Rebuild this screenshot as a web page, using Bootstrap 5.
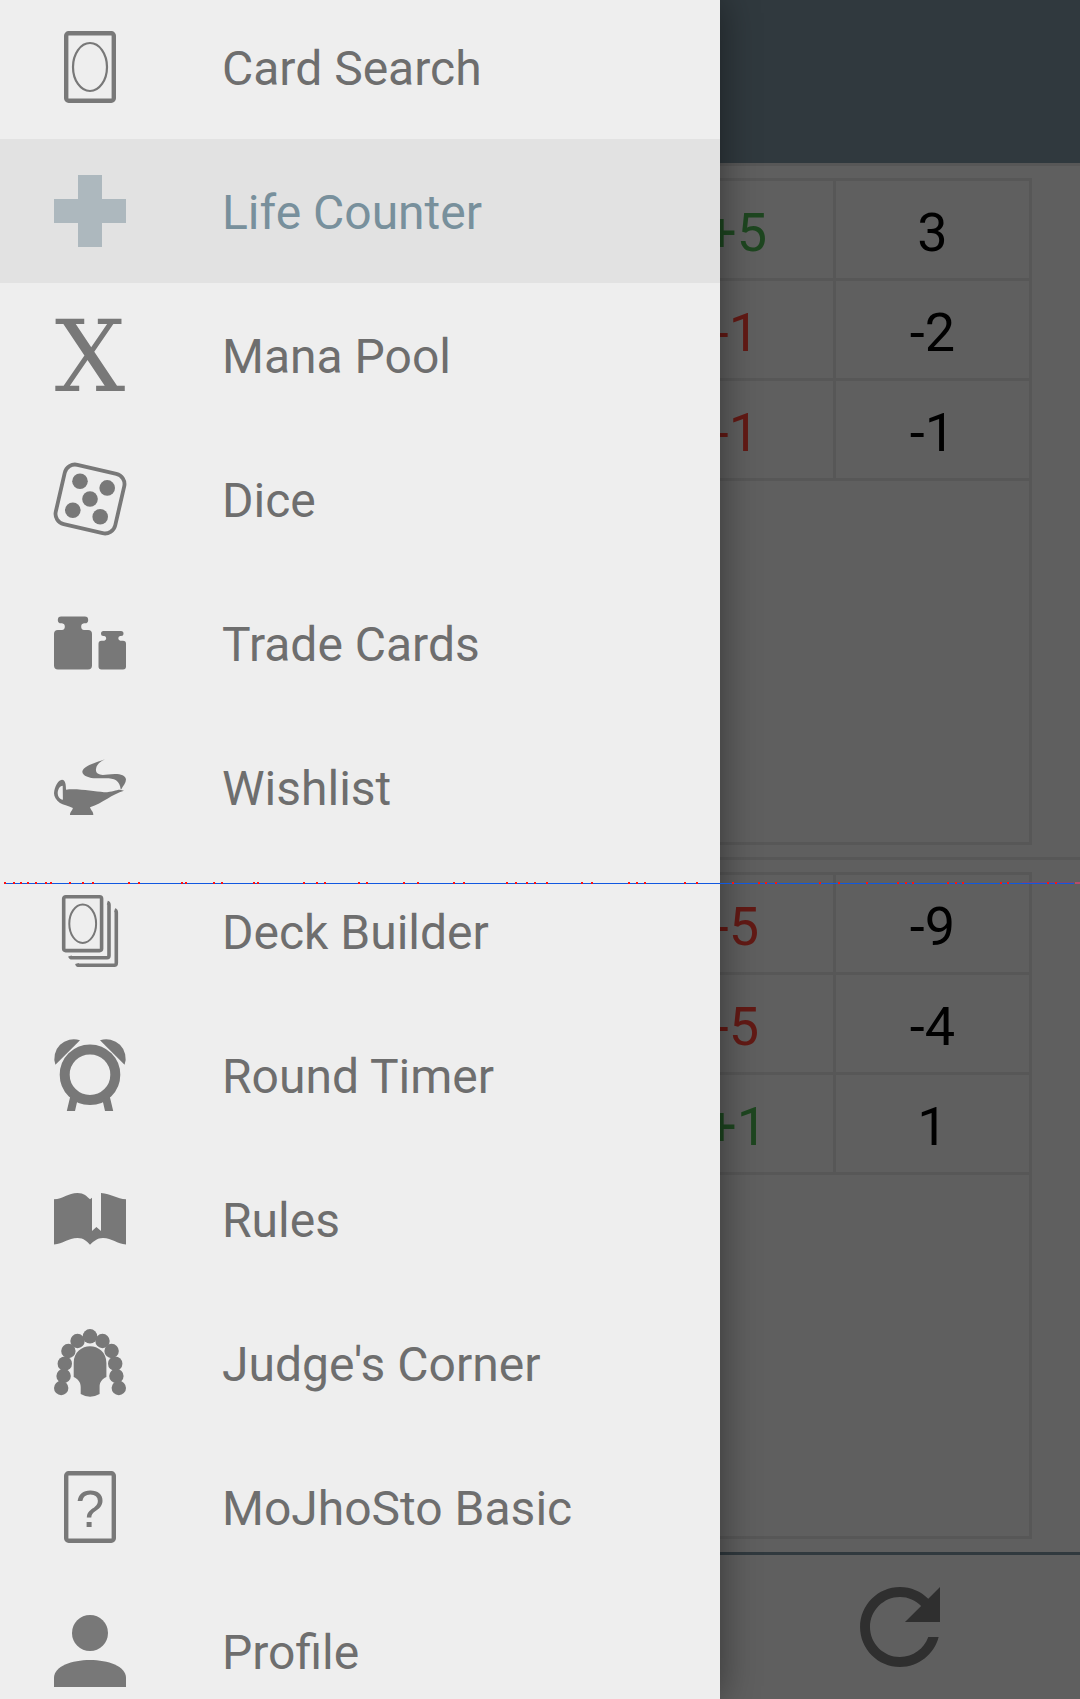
<!DOCTYPE html>
<html lang="en">
<head>
<meta charset="utf-8">
<meta name="viewport" content="width=device-width, initial-scale=1">
<title>Life Counter</title>
<link href="https://cdn.jsdelivr.net/npm/bootstrap@5.3.0/dist/css/bootstrap.min.css" rel="stylesheet">
<style>
body { font-family: Roboto, sans-serif; background: #eee; }
.app-bar { height: 163px; background: #78909c; }
.player { border-top: 3px solid #dadada; padding: 12px 48px 12px 0; }
.history { width: 395px; border: 3px solid #dadada; }
.history table { table-layout: fixed; border-collapse: separate; border-spacing: 0; font-size: 54px; line-height: 64px; }
.history td { height: 100px; padding: 6px 0 0; border-bottom: 3px solid #dadada; text-align: center; vertical-align: middle; color: #000; }
.history td:first-child { width: 193px; }
.history td + td { border-left: 3px solid #dadada; }
.history .gain { color: #4caf50; }
.history .loss { color: #f44336; }
.actions { height: 147px; margin-top: 1px; border-top: 3px solid #78909c; }
.actions svg { width: 80px; height: 80px; fill: #757575; }
.scrim { background: rgba(0, 0, 0, .6); }
.drawer { background: #eee; box-shadow: 0 0 36px rgba(0, 0, 0, .45); }
.drawer-list { margin-top: -5px; }
.drawer-item { height: 144px; padding: 0 54px; gap: 96px; font-size: 48px; line-height: 56px; color: #6e6e6e; }
.drawer-item span { padding-top: 4px; }
.drawer-item svg { width: 72px; height: 72px; flex: none; overflow: visible; fill: #787878; stroke: #787878; stroke-width: 0; }
.drawer-item .outline { fill: none; }
.drawer-item.selected { background: #e2e2e2; color: #78909c; }
.drawer-item.selected svg { fill: #adb8be; }
.trace { top: 882px; height: 3px; }
</style>
</head>
<body>
<div class="position-relative vh-100 overflow-hidden">
  <div class="d-flex flex-column h-100">
    <header class="app-bar"></header>
    <main class="d-flex flex-column flex-grow-1">
      <section class="player d-flex justify-content-end flex-fill">
        <div class="history">
          <table class="w-100">
            <tr><td class="gain">+5</td><td>3</td></tr>
            <tr><td class="loss">-1</td><td>-2</td></tr>
            <tr><td class="loss">-1</td><td>-1</td></tr>
          </table>
        </div>
      </section>
      <section class="player d-flex justify-content-end flex-fill">
        <div class="history">
          <table class="w-100">
            <tr><td class="loss">-5</td><td>-9</td></tr>
            <tr><td class="loss">-5</td><td>-4</td></tr>
            <tr><td class="gain">+1</td><td>1</td></tr>
          </table>
        </div>
      </section>
    </main>
    <footer class="actions row g-0 align-items-center">
      <div class="col-4 offset-8 text-center">
        <button type="button" class="btn p-0 border-0 d-inline-flex" aria-label="Reset">
          <svg viewBox="4 4 16 16"><path d="M17.65 6.35C16.2 4.9 14.21 4 12 4c-4.42 0-7.99 3.58-7.99 8s3.57 8 7.99 8c3.73 0 6.84-2.55 7.73-6h-2.08c-.82 2.33-3.04 4-5.65 4-3.31 0-6-2.69-6-6s2.69-6 6-6c1.66 0 3.14.69 4.22 1.78L13 11h7V4z"/></svg>
        </button>
      </div>
    </footer>
  </div>

  <div class="scrim position-absolute top-0 start-0 w-100 h-100"></div>

  <nav class="drawer col-8 position-absolute top-0 start-0 h-100">
    <div class="drawer-list d-flex flex-column">
      <a href="#" class="drawer-item d-flex align-items-center text-decoration-none">
        <svg viewBox="0 0 72 72"><rect class="outline" x="12.200" y="2.200" width="47.600" height="67.600" rx="2.500" stroke-width="4.400"/><ellipse class="outline" cx="36" cy="36" rx="17" ry="24" stroke-width="2.200"/></svg>
        <span>Card Search</span></a>
      <a href="#" class="drawer-item selected d-flex align-items-center text-decoration-none" aria-current="page">
        <svg viewBox="0 0 72 72"><path d="M24 0h24v24h24v24H48v24H24V48H0V24h24z"/></svg>
        <span>Life Counter</span></a>
      <a href="#" class="drawer-item d-flex align-items-center text-decoration-none">
        <svg viewBox="0 0 72 72"><text x="36" y="72" text-anchor="middle" font-family="DejaVu Serif, serif" font-size="99">X</text></svg>
        <span>Mana Pool</span></a>
      <a href="#" class="drawer-item d-flex align-items-center text-decoration-none">
        <svg viewBox="0 0 72 72"><rect class="outline" x="5.500" y="5.500" width="61" height="61" rx="10.500" stroke-width="3.800" transform="rotate(13 36 36)"/><circle cx="26" cy="18.200" r="7.800"/><circle cx="53.200" cy="24.900" r="7.800"/><circle cx="36" cy="36" r="7.800"/><circle cx="18.800" cy="47.200" r="7.800"/><circle cx="46.200" cy="53.800" r="7.800"/></svg>
        <span>Dice</span></a>
      <a href="#" class="drawer-item d-flex align-items-center text-decoration-none">
        <svg viewBox="0 0 72 72"><path d="M7.200 9.500H30.800a3.400 3.400 0 0 1 0 6.800H30a3.400 3.400 0 0 0 0 6.700h4a4 4 0 0 1 4 4V58.500a4 4 0 0 1-4 4H4a4 4 0 0 1-4-4V27a4 4 0 0 1 4-4H8a3.400 3.400 0 0 0 0-6.700H7.200a3.400 3.400 0 0 1 0-6.800z"/><path d="M49.500 24h17.500a2.500 2.500 0 0 1 0 5h-.8a2.400 2.400 0 0 0 0 4.700H69a3 3 0 0 1 3 3V59.500a3 3 0 0 1-3 3H47.500a3 3 0 0 1-3-3V36.700a3 3 0 0 1 3-3h2.800a2.400 2.400 0 0 0 0-4.700h-.8a2.500 2.500 0 0 1 0-5z"/></svg>
        <span>Trade Cards</span></a>
      <a href="#" class="drawer-item d-flex align-items-center text-decoration-none">
        <svg viewBox="0 0 72 72"><path d="M51 8.300C41 12 29 15 28.300 20.700C28.500 25 36 27.500 43 27.300C52 27.300 58 26.500 62 29.300C65 31.500 66 34 66.700 38.300H67.300C69 35 72 32 72 28.500C71.500 24.500 67 23 61 23C54 23 50 24.500 46 23.600C43 22.800 41.500 21 42 18C42.500 13 47 10.500 51 8.300z"/><path fill-rule="evenodd" d="M12 38.700C25 37.300 40 40.700 50 41.200C59 41.200 62 38.600 66 38.700L70 39.700C58 43 49 52 36 56.300C36.800 59.500 39.500 60.500 39.300 64H16C15.800 61 18.200 60 18.900 56.900C14 54.500 9 54 6 52C2 49.500 0 45.500 0 42.300C0.500 36 4 29 8 28.800C11.200 29 12 33 12 38.700zM8.700 34.700C5.500 34.700 3.700 39 3.700 42C3.800 45.500 5.500 48.200 8.900 48.800z"/></svg>
        <span>Wishlist</span></a>
      <a href="#" class="drawer-item d-flex align-items-center text-decoration-none">
        <svg viewBox="0 0 72 72"><g class="outline" stroke-width="3.600"><rect x="9.700" y="1.700" width="37.900" height="53.900" rx="2"/><path d="M53.300 7.500Q55 8 55 10V60.500Q55 62.700 53 62.700H18Q16.300 62.700 15.900 61"/><path d="M60.600 15Q62.300 15.500 62.300 17.500V68Q62.300 70.300 60.300 70.300H25Q23.300 70.300 22.900 68.500"/></g><ellipse class="outline" cx="28.700" cy="28.700" rx="13.400" ry="19.200" stroke-width="2"/></svg>
        <span>Deck Builder</span></a>
      <a href="#" class="drawer-item d-flex align-items-center text-decoration-none">
        <svg viewBox="0 0 72 72"><circle class="outline" cx="36" cy="35.700" r="25.300" stroke-width="10"/><path d="M26 1.300L1.400 25.800A19.300 19.300 0 0 1 26 1.300zM46 1.300L70.600 25.800A19.300 19.300 0 0 0 46 1.300zM16.600 56L12.800 72H21L23.500 61zM55.400 56L59.200 72H51L48.500 61z"/></svg>
        <span>Round Timer</span></a>
      <a href="#" class="drawer-item d-flex align-items-center text-decoration-none">
        <svg viewBox="0 0 72 72"><path d="M0 16.300C9 16 14 10 23.500 10C30 10 33 13.500 36 16.300L38 14.700V48L42.400 44L47 48V10C57 10.500 63 16 72 16.300V61.500C63 61 58 55 49 55C43 55 39.500 58.500 36 61.800C33 58.500 30 55 23.500 55C14 55 9 61 0 61.500z"/></svg>
        <span>Rules</span></a>
      <a href="#" class="drawer-item d-flex align-items-center text-decoration-none">
        <svg viewBox="0 0 72 72"><circle cx="36" cy="9.300" r="7.200"/><circle cx="23.500" cy="14" r="7.200"/><circle cx="48.500" cy="14" r="7.200"/><circle cx="14.400" cy="24" r="7.200"/><circle cx="57.600" cy="24" r="7.200"/><circle cx="10.800" cy="36.700" r="7.200"/><circle cx="61.200" cy="36.700" r="7.200"/><circle cx="9.600" cy="49" r="7.200"/><circle cx="62.400" cy="49" r="7.200"/><circle cx="7.200" cy="61" r="7.200"/><circle cx="64.800" cy="61" r="7.200"/><path d="M19.700 50V36C19.700 25 28 19.300 36 19.300S52.400 25 52.400 36V50C48 52 45.600 55 45.600 60V67Q36 72.500 26.700 67V60C26.700 55 24 52 19.700 50z"/></svg>
        <span>Judge's Corner</span></a>
      <a href="#" class="drawer-item d-flex align-items-center text-decoration-none">
        <svg viewBox="0 0 72 72"><rect class="outline" x="12.200" y="2.200" width="47.600" height="67.600" rx="2.500" stroke-width="4.400"/><text x="36" y="56" text-anchor="middle" font-family="Liberation Sans, sans-serif" font-size="52">?</text></svg>
        <span>MoJhoSto Basic</span></a>
      <a href="#" class="drawer-item d-flex align-items-center text-decoration-none">
        <svg viewBox="0 0 72 72"><circle cx="36" cy="18" r="18"/><path d="M0 72V63C0 51 18 45 36 45S72 51 72 63V72z"/></svg>
        <span>Profile</span></a>
    </div>
  </nav>

  <!-- pointer trace drawn over the whole screen -->
  <svg class="trace position-absolute start-0 w-100" id="trace" aria-hidden="true">
    <rect x="1022" y="0" width="52" height="1" fill="#7b4770"/>
    <rect x="4" y="1" width="1070" height="1" fill="#1058e0"/>
    <rect x="1075" y="0" width="5" height="2" fill="#b84a6a"/>
  </svg>
</div>
<script src="https://cdn.jsdelivr.net/npm/bootstrap@5.3.0/dist/js/bootstrap.bundle.min.js"></script>
<script>
const points = [4,13,20,27,35,45,50,69,82,92,128,138,181,185,213,221,253,257,303,316,324,358,366,403,417,453,463,506,515,526,534,546,581,591,628,636,644,684,696,732,758,765,775,819,838,866,897,905,912,947,955,962,1000,1007,1047,1055];
for (const x of points) {
  const dot = document.createElementNS("http://www.w3.org/2000/svg", "rect");
  dot.setAttribute("x", x);
  dot.setAttribute("y", 0);
  dot.setAttribute("width", 2);
  dot.setAttribute("height", 2);
  dot.setAttribute("fill", "#ff1010");
  document.getElementById("trace").append(dot);
}
</script>
</body>
</html>
